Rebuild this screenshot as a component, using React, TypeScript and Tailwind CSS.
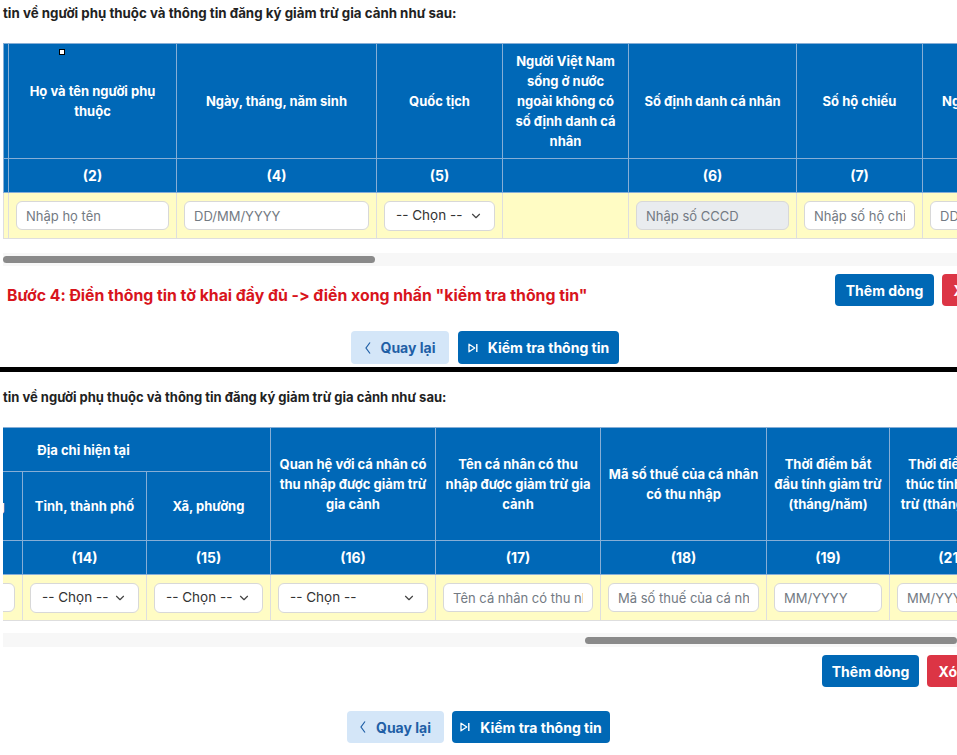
import React from "react";
import { ChevronDown } from "lucide-react";

const headCell =
  "bg-[#0068b7] text-white font-bold text-[13px] leading-[20px] text-center align-middle border border-[#86aed6] px-[6px] whitespace-nowrap";
const numCell =
  "bg-[#0068b7] text-white font-bold text-[14px] text-center align-middle border border-[#86aed6]";
const dataCell = "bg-[#fffcc4] border border-[#dedede] px-[7px] align-middle";

function Lines({ lines }: { lines: string[] }) {
  return (
    <>
      {lines.map((l, i) => (
        <React.Fragment key={i}>
          {i > 0 && <br />}
          {l}
        </React.Fragment>
      ))}
    </>
  );
}

function Field({ placeholder, disabled }: { placeholder: string; disabled?: boolean }) {
  return (
    <input
      readOnly
      placeholder={placeholder}
      className={
        disabled
          ? "block w-full h-[29px] rounded-[6px] border border-[#d8d8d8] bg-[#e9ecef] px-[9px] text-[13px] outline-none placeholder:text-[#737a83]"
          : "block w-full h-[29px] rounded-[6px] border border-[#d8d8d8] bg-white px-[9px] text-[13px] outline-none placeholder:text-[#737a83]"
      }
    />
  );
}

function Choice() {
  return (
    <div className="flex h-[30px] items-center justify-between rounded-[6px] border border-[#d8d8d8] bg-white px-[11px] text-[13.5px] text-[#333]">
      <span>-- Chọn --</span>
      <ChevronDown size={14} strokeWidth={2} className="text-[#444]" />
    </div>
  );
}

function BackIcon() {
  return (
    <svg width="6" height="12" viewBox="0 0 6 12" fill="none">
      <path d="M5 0.5 L1 6 L5 11.5" stroke="currentColor" strokeWidth="1.2" />
    </svg>
  );
}

function CheckIcon() {
  return (
    <svg width="10" height="10" viewBox="0 0 10 10" fill="none">
      <path d="M1 1.2 L6.8 5 L1 8.8 Z" stroke="currentColor" strokeWidth="1.3" strokeLinejoin="round" />
      <path d="M8.8 1 V9" stroke="currentColor" strokeWidth="1.4" />
    </svg>
  );
}

function NavButtons({ h, backW, checkW, gap }: { h: string; backW: string; checkW: string; gap: string }) {
  return (
    <div className={`flex ${gap}`}>
      <button className={`${h} ${backW} flex items-center justify-center gap-[10px] rounded-[4px] bg-[#d4e6f8] text-[14px] font-bold text-[#1f5fa6]`}>
        <BackIcon />
        <span>Quay lại</span>
      </button>
      <button className={`${h} ${checkW} flex items-center justify-center gap-[10px] rounded-[4px] bg-[#0068b5] text-[14px] font-bold text-white`}>
        <CheckIcon />
        <span>Kiểm tra thông tin</span>
      </button>
    </div>
  );
}

function RowButtons({ h, addW }: { h: string; addW: string }) {
  return (
    <div className="flex gap-[8px]">
      <button className={`${h} ${addW} flex items-center justify-center rounded-[4px] bg-[#0068b5] text-[14px] font-bold text-white`}>
        Thêm dòng
      </button>
      <button className={`${h} w-[88px] flex items-center justify-center rounded-[4px] bg-[#dc3545] text-[14px] font-bold text-white`}>
        Xóa dòng
      </button>
    </div>
  );
}

const heading = "tin về người phụ thuộc và thông tin đăng ký giảm trừ gia cảnh như sau:";

function DependentsTable() {
  return (
    <div className="relative ml-[3px] w-[954px] overflow-hidden">
      <table className="w-[1045px] table-fixed border-collapse">
        <colgroup>
          <col className="w-[5px]" />
          <col className="w-[168px]" />
          <col className="w-[200px]" />
          <col className="w-[126px]" />
          <col className="w-[126px]" />
          <col className="w-[168px]" />
          <col className="w-[126px]" />
          <col className="w-[126px]" />
        </colgroup>
        <thead>
          <tr className="h-[115px]">
            <th className={headCell}></th>
            <th className={headCell}>
              <Lines lines={["Họ và tên người phụ", "thuộc"]} />
            </th>
            <th className={headCell}>Ngày, tháng, năm sinh</th>
            <th className={headCell}>Quốc tịch</th>
            <th className={headCell}>
              <Lines lines={["Người Việt Nam", "sống ở nước", "ngoài không có", "số định danh cá", "nhân"]} />
            </th>
            <th className={headCell}>Số định danh cá nhân</th>
            <th className={headCell}>Số hộ chiếu</th>
            <th className={headCell}>Ngày đăng ký</th>
          </tr>
          <tr className="h-[34px]">
            <th className={numCell}></th>
            <th className={numCell}>(2)</th>
            <th className={numCell}>(4)</th>
            <th className={numCell}>(5)</th>
            <th className={numCell}></th>
            <th className={numCell}>(6)</th>
            <th className={numCell}>(7)</th>
            <th className={numCell}>(8)</th>
          </tr>
        </thead>
        <tbody>
          <tr className="h-[46px]">
            <td className="bg-[#fffcc4] border border-[#dedede]"></td>
            <td className={dataCell}>
              <Field placeholder="Nhập họ tên" />
            </td>
            <td className={dataCell}>
              <Field placeholder="DD/MM/YYYY" />
            </td>
            <td className={dataCell}>
              <Choice />
            </td>
            <td className={dataCell}></td>
            <td className={dataCell}>
              <Field placeholder="Nhập số CCCD" disabled />
            </td>
            <td className={dataCell}>
              <Field placeholder="Nhập số hộ chiếu" />
            </td>
            <td className={dataCell}>
              <Field placeholder="DD/MM/YYYY" />
            </td>
          </tr>
        </tbody>
      </table>
      <div className="absolute left-[56px] top-[6px] h-[6px] w-[6px] border border-black bg-white" />
    </div>
  );
}

function AddressTable() {
  return (
    <div className="ml-[3px] w-[954px] overflow-hidden">
      <table className="-ml-[107px] w-[1016px] table-fixed border-collapse">
        <colgroup>
          <col className="w-[126px]" />
          <col className="w-[124px]" />
          <col className="w-[124px]" />
          <col className="w-[165px]" />
          <col className="w-[165px]" />
          <col className="w-[166px]" />
          <col className="w-[123px]" />
          <col className="w-[123px]" />
        </colgroup>
        <thead>
          <tr className="h-[44px]">
            <th colSpan={3} className={headCell}>Địa chỉ hiện tại</th>
            <th rowSpan={2} className={headCell}>
              <Lines lines={["Quan hệ với cá nhân có", "thu nhập được giảm trừ", "gia cảnh"]} />
            </th>
            <th rowSpan={2} className={headCell}>
              <Lines lines={["Tên cá nhân có thu", "nhập được giảm trừ gia", "cảnh"]} />
            </th>
            <th rowSpan={2} className={headCell}>
              <Lines lines={["Mã số thuế của cá nhân", "có thu nhập"]} />
            </th>
            <th rowSpan={2} className={headCell}>
              <Lines lines={["Thời điểm bắt", "đầu tính giảm trừ", "(tháng/năm)"]} />
            </th>
            <th rowSpan={2} className={headCell}>
              <Lines lines={["Thời điểm kết", "thúc tính giảm", "trừ (tháng/năm)"]} />
            </th>
          </tr>
          <tr className="h-[69px]">
            <th className={headCell}>Số nhà, đường</th>
            <th className={headCell}>Tỉnh, thành phố</th>
            <th className={headCell}>Xã, phường</th>
          </tr>
          <tr className="h-[34px]">
            <th className={numCell}>(13)</th>
            <th className={numCell}>(14)</th>
            <th className={numCell}>(15)</th>
            <th className={numCell}>(16)</th>
            <th className={numCell}>(17)</th>
            <th className={numCell}>(18)</th>
            <th className={numCell}>(19)</th>
            <th className={numCell}>(21)</th>
          </tr>
        </thead>
        <tbody>
          <tr className="h-[46px]">
            <td className={dataCell}>
              <Field placeholder="Số nhà, đường phố:" />
            </td>
            <td className={dataCell}>
              <Choice />
            </td>
            <td className={dataCell}>
              <Choice />
            </td>
            <td className={dataCell}>
              <Choice />
            </td>
            <td className={dataCell}>
              <Field placeholder="Tên cá nhân có thu nhập" />
            </td>
            <td className={dataCell}>
              <Field placeholder="Mã số thuế của cá nhân có thu nhập" />
            </td>
            <td className={dataCell}>
              <Field placeholder="MM/YYYY" />
            </td>
            <td className={dataCell}>
              <Field placeholder="MM/YYYY" />
            </td>
          </tr>
        </tbody>
      </table>
    </div>
  );
}

export default function App() {
  return (
    <div className="h-[755px] w-[957px] overflow-hidden bg-white font-['Inter',sans-serif] text-[#212529]">
      {/* upper step */}
      <section className="h-[367px] w-[1040px]">
        <div className="h-[43px] pl-[3px] pt-[4px] text-[13.3px] font-bold leading-[18px] text-[#222]">{heading}</div>
        <DependentsTable />
        <div className="ml-[3px] mt-[14px] h-[13px] w-[954px] bg-[#f7f7f7] pt-[3px]">
          <div className="h-[7px] w-[372px] rounded-full bg-[#8a8a8a]" />
        </div>
        <div className="mt-[8px] flex items-end justify-between pl-[7px] pr-[10px]">
          <p className="text-[15.8px] font-bold leading-[20px] text-[#d8141c] [font-feature-settings:'calt'_0]">
            Bước 4: Điền thông tin tờ khai đầy đủ -&gt; điền xong nhấn "kiểm tra thông tin"
          </p>
          <RowButtons h="h-[32px]" addW="w-[99px]" />
        </div>
        <div className="mt-[25px] flex w-[957px] justify-center pl-[13px]">
          <NavButtons h="h-[33px]" backW="w-[98px]" checkW="w-[161px]" gap="gap-[9px]" />
        </div>
      </section>
      <div className="h-[5px] w-[957px] bg-black" />
      {/* lower step */}
      <section className="w-[1040px]">
        <div className="h-[55px] pl-[3px] pt-[16px] text-[13px] font-bold leading-[18px] text-[#222]">{heading}</div>
        <AddressTable />
        <div className="ml-[3px] mt-[12px] flex h-[14px] w-[954px] bg-[#f7f7f7] pt-[4px]">
          <div className="ml-[582px] h-[7px] flex-1 rounded-full bg-[#8a8a8a]" />
        </div>
        <div className="mt-[8px] flex justify-end pr-[25px]">
          <RowButtons h="h-[32px]" addW="w-[97px]" />
        </div>
        <div className="mt-[24px] flex w-[957px] justify-center">
          <NavButtons h="h-[32px]" backW="w-[97px]" checkW="w-[158px]" gap="gap-[8px]" />
        </div>
      </section>
    </div>
  );
}
